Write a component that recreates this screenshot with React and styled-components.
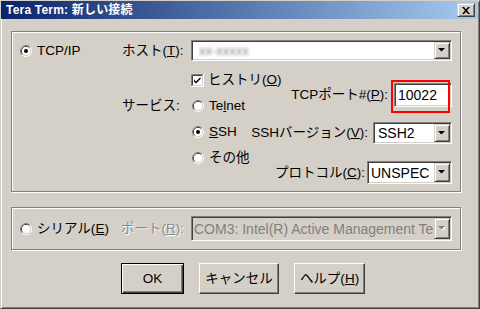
import React from 'react';
import styled, { createGlobalStyle, css } from 'styled-components';

const Global = createGlobalStyle`
  html, body {
    margin: 0;
    padding: 0;
    background: #d4d0c8;
  }
  body {
    font-family: "Liberation Sans", "Noto Sans CJK JP", sans-serif;
    font-size: 13.5px;
    color: #000;
  }
  u {
    text-decoration: underline;
    text-underline-offset: 1px;
  }
`;

const raised = css`
  background: #d4d0c8;
  border: 1px solid;
  border-color: #d4d0c8 #404040 #404040 #d4d0c8;
  box-shadow: inset 1px 1px 0 #fff, inset -1px -1px 0 #808080;
`;

const sunken = css`
  border: 1px solid;
  border-color: #808080 #fff #fff #808080;
  box-shadow: inset 1px 1px 0 #404040, inset -1px -1px 0 #d4d0c8;
`;

const Window = styled.div`
  width: 480px;
  height: 309px;
  box-sizing: border-box;
  display: flex;
  flex-direction: column;
  background: #d4d0c8;
  border: 1px solid;
  border-color: #d4d0c8 #404040 #404040 #d4d0c8;
  box-shadow: inset 1px 1px 0 #fff, inset -1px -1px 0 #808080;
`;

const TitleBar = styled.div`
  height: 18px;
  margin-right: 1px;
  display: flex;
  align-items: center;
  justify-content: space-between;
  background: linear-gradient(to right, #0a246a, #a6caf0);
`;

const TitleText = styled.span`
  padding-left: 5px;
  color: #fff;
  font-size: 12px;
  font-weight: bold;
  line-height: 14px;
  letter-spacing: 0.2px;
`;

const CloseButton = styled.div`
  ${raised};
  box-sizing: border-box;
  width: 18px;
  height: 14px;
  margin-right: 3px;
  display: flex;
  align-items: center;
  justify-content: center;
`;

const Body = styled.div`
  padding: 12px 17px 0 10px;
  display: flex;
  flex-direction: column;
`;

const GroupBox = styled.div`
  box-sizing: border-box;
  width: 450px;
  height: ${(p) => p.$h}px;
  margin-top: ${(p) => p.$mt || 0}px;
  padding: 8px 8px 0 8px;
  border: 1px solid #808080;
  box-shadow: inset 1px 1px 0 #fff, 1px 1px 0 #fff;
`;

const Row = styled.div`
  display: flex;
  align-items: center;
  height: ${(p) => p.$h || 21}px;
`;

const RadioCell = styled.div`
  width: ${(p) => p.$w}px;
  display: flex;
  align-items: center;
  gap: 5px;
  line-height: 16px;
  white-space: nowrap;
`;

const Label = styled.div`
  width: ${(p) => p.$w}px;
  line-height: 16px;
  white-space: nowrap;
  color: ${(p) => (p.$disabled ? '#8a8a8a' : '#000')};
  text-shadow: ${(p) => (p.$disabled ? '1px 1px 0 #fff' : 'none')};
  padding-top: ${(p) => p.$pt || 0}px;
`;

const Lower = styled.div`
  display: flex;
  margin-top: 10px;
`;

const Spacer = styled.div`
  width: ${(p) => p.$w}px;
  flex-shrink: 0;
`;

const Options = styled.div`
  display: flex;
  flex-direction: column;
  gap: 8px;
  width: 57px;
  flex-shrink: 0;
`;

const Option = styled.div`
  height: 18px;
  display: flex;
  align-items: center;
  gap: ${(p) => p.$gap || 5}px;
  white-space: nowrap;
  line-height: 16px;
  padding-left: ${(p) => p.$pl || 0}px;
`;

const RightCol = styled.div`
  flex: 1;
  display: flex;
  flex-direction: column;
  align-items: flex-end;
  padding-top: 12px;
`;

const FieldRow = styled.div`
  display: flex;
  align-items: center;
  gap: ${(p) => p.$gap}px;
  margin-top: ${(p) => p.$mt || 0}px;
  white-space: nowrap;
  line-height: 16px;
`;

const Combo = styled.div`
  ${sunken};
  box-sizing: border-box;
  width: ${(p) => p.$w}px;
  height: ${(p) => p.$h || 22}px;
  display: flex;
  align-items: stretch;
  padding: 1px;
  background: ${(p) => (p.$disabled ? '#d4d0c8' : '#fff')};
`;

const ComboText = styled.div`
  flex: 1;
  overflow: hidden;
  white-space: nowrap;
  display: flex;
  align-items: center;
  padding-left: ${(p) => p.$pl || 3}px;
  font-size: 14px;
  color: ${(p) => (p.$disabled ? '#808080' : '#000')};
`;

const DropButton = styled.div`
  ${raised};
  box-sizing: border-box;
  width: 16px;
  display: flex;
  align-items: center;
  justify-content: center;
`;

const Blurred = styled.span`
  color: #8a8a8a;
  filter: blur(1.4px);
  font-size: 13px;
  padding-left: 3px;
`;

const PortField = styled.div`
  ${sunken};
  position: relative;
  box-sizing: border-box;
  width: 58px;
  height: 24px;
  background: #fff;
  display: flex;
  align-items: center;
  padding-left: 3px;
  font-size: 14px;
`;

const Highlight = styled.div`
  position: absolute;
  left: -4px;
  top: -4px;
  width: 59px;
  height: 33px;
  box-sizing: border-box;
  border: 2px solid #f00;
  pointer-events: none;
`;

const ButtonRow = styled.div`
  display: flex;
  margin-top: 13px;
  padding-left: 120px;
  gap: 15px;
`;

const Button = styled.div`
  box-sizing: border-box;
  width: ${(p) => p.$w}px;
  height: 31px;
  display: flex;
  align-items: center;
  justify-content: center;
  background: #d4d0c8;
  line-height: 16px;
  white-space: nowrap;
  border: 1px solid;
  ${(p) =>
    p.$default
      ? css`
          border-color: #000;
          box-shadow: inset 1px 1px 0 #fff, inset -1px -1px 0 #404040, inset -2px -2px 0 #808080;
        `
      : css`
          border-color: #fff #404040 #404040 #fff;
          box-shadow: inset -1px -1px 0 #808080;
        `}
`;

const Arrow = ({ disabled }) => (
  <svg width="8" height="5" viewBox="0 0 8 5">
    {disabled && <path d="M1 1h7L4.5 4.5z" fill="#fff" />}
    <path d="M0 0h7L3.5 3.5z" fill={disabled ? '#808080' : '#000'} />
  </svg>
);

const Radio = ({ checked }) => (
  <svg width="12" height="12" viewBox="0 0 12 12" style={{ flexShrink: 0 }}>
    <path d="M2.11 9.89A5.5 5.5 0 0 1 9.89 2.11" stroke="#808080" fill="none" />
    <path d="M9.89 2.11A5.5 5.5 0 0 1 2.11 9.89" stroke="#fff" fill="none" />
    <path d="M2.82 9.18A4.5 4.5 0 0 1 9.18 2.82" stroke="#404040" fill="none" />
    <path d="M9.18 2.82A4.5 4.5 0 0 1 2.82 9.18" stroke="#d4d0c8" fill="none" />
    <circle cx="6" cy="6" r="4" fill="#fff" />
    {checked && <circle cx="6" cy="6" r="2" fill="#000" />}
  </svg>
);

const Checkbox = () => (
  <svg width="13" height="13" viewBox="0 0 13 13" style={{ flexShrink: 0 }}>
    <rect x="0" y="0" width="13" height="13" fill="#fff" />
    <path d="M0.5 12.5V0.5H12.5" stroke="#808080" fill="none" />
    <path d="M1.5 11.5V1.5H11.5" stroke="#404040" fill="none" />
    <path d="M0 12.5H12.5V0" stroke="#fff" fill="none" />
    <path d="M1.5 11.5H11.5V1.5" stroke="#d4d0c8" fill="none" />
    <path d="M3 5.5l2 2 4.5-4.5v2l-4.5 4.5-2-2z" fill="#000" />
  </svg>
);

const CloseIcon = () => (
  <svg width="8" height="7" viewBox="0 0 8 7">
    <path d="M0 0h2l2 2.2L6 0h2L5 3.5 8 7H6L4 4.8 2 7H0l3-3.5z" fill="#000" />
  </svg>
);

const ComboBox = ({ w, h, disabled, children }) => (
  <Combo $w={w} $h={h} $disabled={disabled}>
    {children}
    <DropButton>
      <Arrow disabled={disabled} />
    </DropButton>
  </Combo>
);

export default function App() {
  return (
    <>
      <Global />
      <Window>
        <TitleBar>
          <TitleText>Tera Term: 新しい接続</TitleText>
          <CloseButton>
            <CloseIcon />
          </CloseButton>
        </TitleBar>
        <Body>
          <GroupBox $h={161}>
            <Row $h={21}>
              <RadioCell $w={102}>
                <Radio checked />
                <span>TCP/IP</span>
              </RadioCell>
              <Label $w={69}>
                ホスト(<u>T</u>):
              </Label>
              <ComboBox w={261} h={21}>
                <ComboText>
                  <Blurred>xx-xxxxx</Blurred>
                </ComboText>
              </ComboBox>
            </Row>
            <Lower>
              <Spacer $w={102} />
              <Label $w={69} $pt={27}>
                サービス:
              </Label>
              <Options>
                <Option $gap={4}>
                  <Checkbox />
                  <span>
                    ヒストリ(<u>O</u>)
                  </span>
                </Option>
                <Option $pl={1}>
                  <Radio />
                  <span>
                    Te<u>l</u>net
                  </span>
                </Option>
                <Option $pl={1}>
                  <Radio checked />
                  <span>
                    <u>S</u>SH
                  </span>
                </Option>
                <Option $pl={1}>
                  <Radio />
                  <span>その他</span>
                </Option>
              </Options>
              <RightCol>
                <FieldRow $gap={6}>
                  <span>
                    TCPポート#(<u>P</u>):
                  </span>
                  <PortField>
                    10022
                    <Highlight />
                  </PortField>
                </FieldRow>
                <FieldRow $gap={5} $mt={15}>
                  <span>
                    SSHバージョン(<u>V</u>):
                  </span>
                  <ComboBox w={79} h={22}>
                    <ComboText>SSH2</ComboText>
                  </ComboBox>
                </FieldRow>
                <FieldRow $gap={2} $mt={17}>
                  <span>
                    プロトコル(<u>C</u>):
                  </span>
                  <ComboBox w={85} h={23}>
                    <ComboText $pl={2}>UNSPEC</ComboText>
                  </ComboBox>
                </FieldRow>
              </RightCol>
            </Lower>
          </GroupBox>
          <GroupBox $h={43} $mt={15}>
            <Row $h={25}>
              <RadioCell $w={101}>
                <Radio />
                <span>
                  シリアル(<u>E</u>)
                </span>
              </RadioCell>
              <Label $w={70} $disabled>
                ポート(<u>R</u>):
              </Label>
              <ComboBox w={261} h={25} disabled>
                <ComboText $disabled $pl={1}>
                  COM3: Intel(R) Active Management Technology - SOL (COM3)
                </ComboText>
              </ComboBox>
            </Row>
          </GroupBox>
        </Body>
        <ButtonRow>
          <Button $w={63} $default>
            OK
          </Button>
          <Button $w={80}>キャンセル</Button>
          <Button $w={71}>
            <span>
              ヘルプ(<u>H</u>)
            </span>
          </Button>
        </ButtonRow>
      </Window>
    </>
  );
}
